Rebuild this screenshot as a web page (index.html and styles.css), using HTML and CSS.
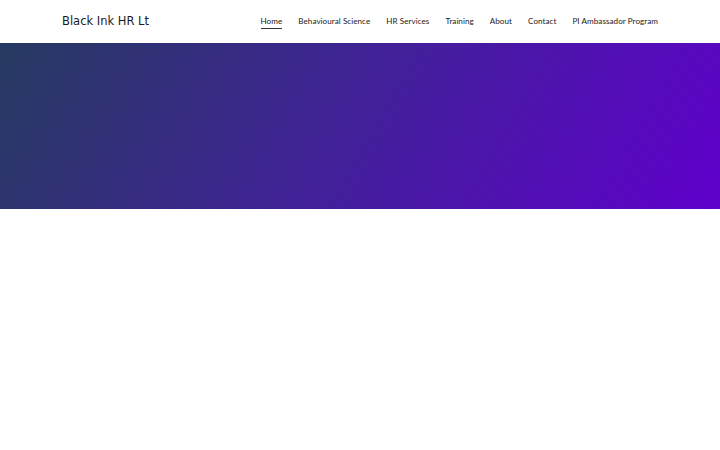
FILE: index.html
```html
<!DOCTYPE html>
<html>
<head>
<meta charset="utf-8">
<link rel="stylesheet" href="styles.css">
</head>
<body>
<header class="site-header">
  <div class="logo">Black Ink HR Lt</div>
  <nav class="nav">
    <a class="nav-link active" href="#">Home</a>
    <a class="nav-link" href="#">Behavioural Science</a>
    <a class="nav-link" href="#">HR Services</a>
    <a class="nav-link" href="#">Training</a>
    <a class="nav-link" href="#">About</a>
    <a class="nav-link" href="#">Contact</a>
    <a class="nav-link" href="#">PI Ambassador Program</a>
  </nav>
</header>
<section class="hero"></section>
</body>
</html>
```
FILE: styles.css
```css
* { box-sizing: border-box; }
html, body { margin: 0; padding: 0; background: #ffffff; }
.site-header {
  height: 43px;
  display: flex;
  align-items: center;
  justify-content: space-between;
  padding: 0 62px;
}
.logo {
  font-family: "DejaVu Sans", sans-serif;
  font-size: 11.5px;
  color: #1a1a1a;
  margin-top: -1px;
}
.nav {
  display: flex;
  gap: 16px;
  align-items: center;
}
.nav-link {
  font-family: Lato, sans-serif;
  font-size: 8.1px;
  letter-spacing: 0.05px;
  color: #222222;
  text-decoration: none;
  padding-bottom: 2px;
  border-bottom: 1px solid transparent;
  margin-top: 2px;
}
.nav-link.active { border-bottom-color: #333333; }
.hero {
  height: 166px;
  background: linear-gradient(120deg, #263a60 0%, #42209a 50%, #6000cc 100%);
}
```
